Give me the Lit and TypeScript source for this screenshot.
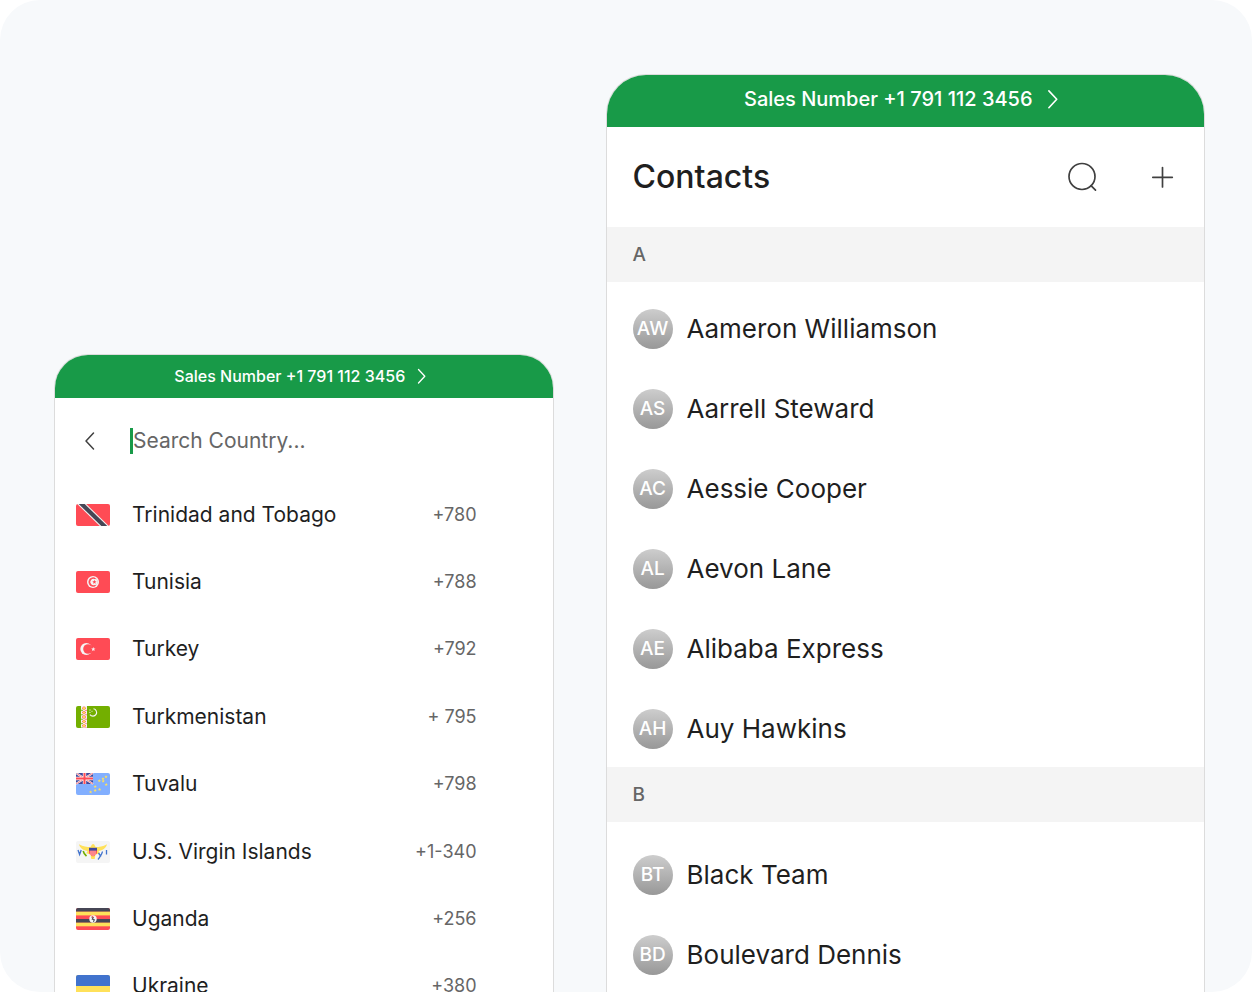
import { LitElement, html, css, svg, type SVGTemplateResult } from "lit";
import { customElement, property } from "lit/decorators.js";

interface Country {
  name: string;
  code: string;
  flag: SVGTemplateResult;
}

interface Contact {
  initials: string;
  name: string;
}

interface ContactGroup {
  letter: string;
  contacts: Contact[];
}

const star = (x: number, y: number, s: number, fill: string) => svg`
  <path fill=${fill} transform="translate(${x} ${y}) scale(${s})"
    d="M0 -1 L.27 -.34 L.98 -.3 L.43 .14 L.6 .82 L0 .44 L-.6 .82 L-.43 .14 L-.98 -.3 L-.27 -.34Z"/>`;

const flags: Record<string, SVGTemplateResult> = {
  trinidad: svg`
    <rect width="34" height="22" fill="#ff4b55"/>
    <path fill="#f5f5f5" d="M1.2 0h9L32.800 22h-9z"/>
    <path fill="#464655" d="M2.700 0h6L31.300 22h-6z"/>`,
  tunisia: svg`
    <rect width="34" height="22" fill="#ff4b55"/>
    <circle cx="17" cy="11" r="6" fill="#f5f5f5"/>
    <circle cx="17" cy="11" r="4.500" fill="#ff4b55"/>
    <circle cx="17.400" cy="11" r="3.900" fill="#f5f5f5"/>
    <circle cx="18.500" cy="11" r="3" fill="#f5f5f5"/>
    <path fill="none" stroke="#ff4b55" stroke-width="1.200" d="M19.500 7.800a3.800 3.800 0 1 0 0 6.400"/>
    ${star(18.4, 11, 2.2, "#ff4b55")}`,
  turkey: svg`
    <rect width="34" height="22" fill="#ff4b55"/>
    <circle cx="10.3" cy="11" r="6" fill="#f5f5f5"/>
    <circle cx="12" cy="11" r="4.8" fill="#ff4b55"/>
    ${star(17.3, 11.2, 2.2, "#f5f5f5")}`,
  turkmenistan: svg`
    <rect width="34" height="22" fill="#73af00"/>
    <rect x="5" width="6" height="22" fill="#f5f5f5"/>
    ${[2.2, 6.6, 11, 15.4, 19.8].map(
      (y) => svg`
        <path fill="#ff4b55" d="M8 ${y - 1.9}l2.2 1.9l-2.2 1.9l-2.2 -1.9z"/>
        <circle cx="8" cy=${y} r="1.200" fill="#ffe15a"/>
        <circle cx="6" cy=${y + 2.2} r=".8" fill="#73af00"/>
        <circle cx="10" cy=${y + 2.2} r=".7" fill="#ff4b55"/>`
    )}
    <path fill="none" stroke="#f5f5f5" stroke-width="1.1" d="M17.5 2.8a3.7 3.7 0 1 1-3.6 5.8"/>
    ${star(14, 4, 0.9, "#f5f5f5")}${star(16, 5.2, 0.9, "#f5f5f5")}${star(13.9, 6.4, 0.9, "#f5f5f5")}`,
  tuvalu: svg`
    <rect width="34" height="22" fill="#82afff"/>
    <rect width="17" height="11" fill="#41479b"/>
    <path stroke="#f5f5f5" stroke-width="2" d="M0 0l17 11M17 0L0 11"/>
    <path stroke="#ff4b55" stroke-width=".7" d="M0 0l17 11M17 0L0 11"/>
    <path stroke="#f5f5f5" stroke-width="3.4" d="M8.5 0v11M0 5.5h17"/>
    <path stroke="#ff4b55" stroke-width="2" d="M8.5 0v11M0 5.5h17"/>
    ${[
      [30, 3.8], [27, 5.8], [23.3, 7.8], [27.2, 8.2], [30.2, 11.5],
      [19.2, 13.6], [19.2, 17.4], [23.6, 16.4], [14.6, 19],
    ].map(([x, y]) => star(x, y, 1.7, "#ffe15a"))}`,
  virgin: svg`
    <rect width="34" height="22" fill="#f5f5f5"/>
    <path fill="#ffe15a" d="M3 3.2c4.2 2.4 8 2.8 11.4 2.9L16 3.6c.6-.8 1.700-.8 2.200 0l1.400 2.500c3.700-.1 7.200-.6 11.400-2.900c-1 4.200-4.600 6-8.600 6.800l1.600 2.200l-4.500 1.300l-.8 4.500h-3.400l-.8-4.500l-4.300-1.300l1.400-2.200c-4-.8-7.700-2.600-8.600-6.800z"/>
    <path fill="#ff4b55" d="M13 8h8v3c0 2-1.600 3.300-4 4.400c-2.400-1.100-4-2.400-4-4.400z"/>
    <path stroke="#f5f5f5" stroke-width=".7" d="M15 9v5M17 9v6M19 9v5"/>
    <rect x="13" y="6.800" width="8" height="2.800" fill="#41479b"/>
    <path fill="none" stroke="#73af00" stroke-width="1.600" d="M7.200 10c.4 2 1.600 3.600 3.300 5.200"/>
    <path fill="none" stroke="#4173cd" stroke-width="1.300" d="M2 9l1.600 4.500L5.200 9M30.500 9v4.600M26.500 10.500c-.5 3-2.400 5.200-4.500 8M22.500 12l2.500 3.500"/>`,
  uganda: svg`
    <rect width="34" height="22" fill="#ff4b55"/>
    <rect width="34" height="3.700" fill="#464655"/>
    <rect y="3.700" width="34" height="3.700" fill="#ffe15a"/>
    <rect y="11" width="34" height="3.700" fill="#464655"/>
    <rect y="14.700" width="34" height="3.600" fill="#ffe15a"/>
    <circle cx="17" cy="11" r="3.700" fill="#f5f5f5"/>
    <path fill="none" stroke="#464655" stroke-width="1.100" d="M15.500 9l1.700 .5l-.9 1.700l2 .6l-.9 2"/>
    <circle cx="16.600" cy="8.700" r=".7" fill="#ff4b55"/>`,
  ukraine: svg`
    <rect width="34" height="22" fill="#ffe15a"/>
    <rect width="34" height="11" fill="#4173cd"/>`,
};

const countries: Country[] = [
  { name: "Trinidad and Tobago", code: "+780", flag: flags.trinidad },
  { name: "Tunisia", code: "+788", flag: flags.tunisia },
  { name: "Turkey", code: "+792", flag: flags.turkey },
  { name: "Turkmenistan", code: "+ 795", flag: flags.turkmenistan },
  { name: "Tuvalu", code: "+798", flag: flags.tuvalu },
  { name: "U.S. Virgin Islands", code: "+1-340", flag: flags.virgin },
  { name: "Uganda", code: "+256", flag: flags.uganda },
  { name: "Ukraine", code: "+380", flag: flags.ukraine },
];

const groups: ContactGroup[] = [
  {
    letter: "A",
    contacts: [
      { initials: "AW", name: "Aameron Williamson" },
      { initials: "AS", name: "Aarrell Steward" },
      { initials: "AC", name: "Aessie Cooper" },
      { initials: "AL", name: "Aevon Lane" },
      { initials: "AE", name: "Alibaba Express" },
      { initials: "AH", name: "Auy Hawkins" },
    ],
  },
  {
    letter: "B",
    contacts: [
      { initials: "BT", name: "Black Team" },
      { initials: "BD", name: "Boulevard Dennis" },
    ],
  },
];

const reset = css`
  * {
    box-sizing: border-box;
  }
  button {
    display: flex;
    align-items: center;
    justify-content: center;
    margin: 0;
    padding: 0;
    border: 0;
    background: none;
    color: inherit;
    font: inherit;
    cursor: pointer;
  }
  ul {
    margin: 0;
    padding: 0;
    list-style: none;
  }
  svg {
    display: block;
    flex: none;
  }
`;

@customElement("sales-bar")
export class SalesBar extends LitElement {
  @property({ type: Boolean, reflect: true }) large = false;

  static styles = [
    reset,
    css`
      :host {
        display: block;
        background: #189a48;
        color: #fff;
        font-size: 16px;
        font-weight: 500;
      }
      .link {
        width: 100%;
        height: 43px;
        padding-bottom: 2px;
        gap: 12px;
      }
      .chevron {
        width: 16px;
        height: 16px;
      }
      :host([large]) {
        font-size: 20px;
      }
      :host([large]) .link {
        height: 52px;
        padding-bottom: 4px;
        gap: 14px;
      }
      :host([large]) .chevron {
        width: 20px;
        height: 20px;
      }
    `,
  ];

  render() {
    return html`
      <button class="link" type="button">
        <span>Sales Number +1 791 112 3456</span>
        <svg class="chevron" viewBox="0 0 16 16" fill="none" stroke="currentColor"
          stroke-width="1.300" stroke-linecap="round" stroke-linejoin="round" aria-hidden="true">
          <path d="M1.500 1.500L7.800 8.200L1.500 15" />
        </svg>
      </button>
    `;
  }
}

@customElement("country-picker")
export class CountryPicker extends LitElement {
  static styles = [
    reset,
    css`
      :host {
        display: block;
      }
      .search {
        display: flex;
        align-items: center;
        height: 83px;
        padding: 2px 20px 0;
      }
      .back {
        width: 30px;
        height: 40px;
        margin-right: 25px;
        color: #404040;
      }
      .field {
        flex: 1;
        min-width: 0;
        height: 26px;
        padding: 0;
        border: 0;
        border-left: 3px solid #189a48;
        outline: 0;
        background: none;
        color: #1f1f1f;
        font: inherit;
        font-size: 21px;
      }
      .field::placeholder {
        color: #666;
        opacity: 1;
      }
      .list {
        display: grid;
        grid-auto-rows: 1fr;
        min-height: 539px;
      }
      .row {
        display: grid;
        grid-template-columns: 34px 1fr auto;
        align-items: center;
        gap: 22px;
        padding: 0 76px 0 21px;
        color: #1f1f1f;
        font-size: 21px;
        line-height: 28px;
      }
      .flag {
        width: 34px;
        height: 22px;
        border-radius: 2px;
      }
      .code {
        color: #666;
        font-size: 18px;
      }
    `,
  ];

  render() {
    return html`
      <div class="search">
        <button class="back" type="button" aria-label="Back">
          <svg width="12" height="20" viewBox="0 0 12 20" fill="none" stroke="currentColor"
            stroke-width="1.500" stroke-linecap="round" stroke-linejoin="round">
            <path d="M9.500 2L2 10L9.500 18" />
          </svg>
        </button>
        <input class="field" type="text" aria-label="Search Country" placeholder="Search Country..." />
      </div>
      <ul class="list">
        ${countries.map(
          (c) => html`
            <li class="row">
              <svg class="flag" viewBox="0 0 34 22" aria-hidden="true">${c.flag}</svg>
              <span>${c.name}</span>
              <span class="code">${c.code}</span>
            </li>
          `
        )}
      </ul>
    `;
  }
}

@customElement("contact-list")
export class ContactList extends LitElement {
  static styles = [
    reset,
    css`
      :host {
        display: block;
        color: #1f1f1f;
      }
      .head {
        display: flex;
        align-items: center;
        height: 100px;
        padding: 0 21px 0 26px;
      }
      .title {
        flex: 1;
        margin: 0;
        font-size: 32px;
        font-weight: 500;
        line-height: 40px;
      }
      .actions {
        display: flex;
        gap: 40px;
        color: #404040;
      }
      .action {
        width: 40px;
        height: 40px;
      }
      .letter {
        margin: 0;
        padding: 0 26px;
        background: #f4f4f4;
        color: #666;
        font-size: 19px;
        font-weight: 500;
        line-height: 55px;
      }
      .list {
        display: grid;
        gap: 40px;
        padding: 27px 26px 18px;
      }
      .group + .group .list {
        padding-top: 33px;
      }
      .row {
        display: flex;
        align-items: center;
        gap: 14px;
        font-size: 26px;
        line-height: 40px;
      }
      .avatar {
        display: flex;
        flex: none;
        align-items: center;
        justify-content: center;
        width: 40px;
        height: 40px;
        border-radius: 50%;
        background: linear-gradient(#cdcdcd, #989898);
        color: #fff;
        font-size: 19px;
        font-weight: 500;
      }
    `,
  ];

  render() {
    return html`
      <header class="head">
        <h1 class="title">Contacts</h1>
        <div class="actions">
          <button class="action" type="button" aria-label="Search">
            <svg width="40" height="40" viewBox="0 0 40 40" fill="none" stroke="currentColor"
              stroke-width="1.700" stroke-linecap="round">
              <circle cx="19" cy="19.500" r="13" />
              <path d="M28 28.700L32.500 33.200" />
            </svg>
          </button>
          <button class="action" type="button" aria-label="Add contact">
            <svg width="40" height="40" viewBox="0 0 40 40" fill="none" stroke="currentColor"
              stroke-width="1.700" stroke-linecap="round">
              <path d="M19.500 10.500v19.500M9.800 20.300h19.500" />
            </svg>
          </button>
        </div>
      </header>
      ${groups.map(
        (g) => html`
          <section class="group">
            <h2 class="letter">${g.letter}</h2>
            <ul class="list">
              ${g.contacts.map(
                (c) => html`
                  <li class="row">
                    <span class="avatar" aria-hidden="true">${c.initials}</span>
                    <span>${c.name}</span>
                  </li>
                `
              )}
            </ul>
          </section>
        `
      )}
    `;
  }
}

@customElement("app-root")
export class AppRoot extends LitElement {
  static styles = [
    reset,
    css`
      :host {
        display: block;
        background: #fff;
        font-family: Inter, "Liberation Sans", sans-serif;
      }
      .stage {
        display: grid;
        grid-template-columns: 5fr 6fr;
        gap: 52px;
        height: 100vh;
        padding: 74px 47px 0 54px;
        overflow: hidden;
        border-radius: 40px;
        background: #f7f9fb;
      }
      .screen {
        overflow: hidden;
        border: 1px solid #dcdcdc;
        border-bottom: 0;
        border-radius: 40px 40px 0 0;
        background: #fff;
      }
      .small {
        margin-top: 280px;
        border-radius: 34px 34px 0 0;
      }
    `,
  ];

  render() {
    return html`
      <main class="stage">
        <section class="screen small">
          <sales-bar></sales-bar>
          <country-picker></country-picker>
        </section>
        <section class="screen">
          <sales-bar large></sales-bar>
          <contact-list></contact-list>
        </section>
      </main>
    `;
  }
}
